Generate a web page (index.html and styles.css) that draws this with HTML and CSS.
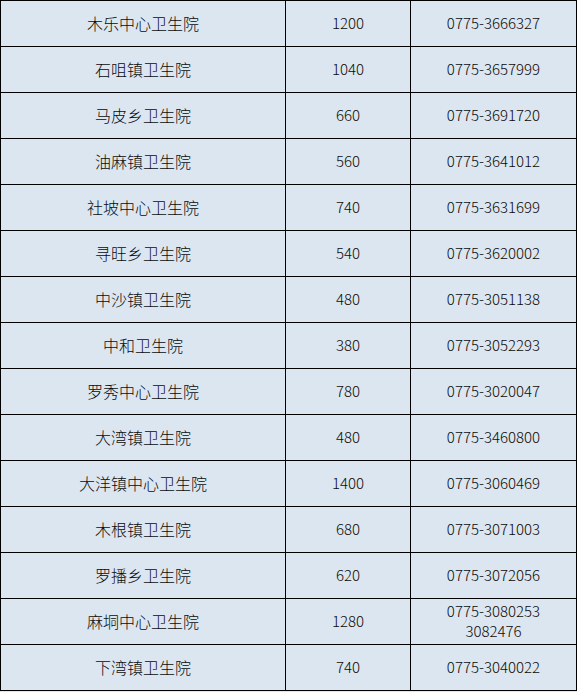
FILE: index.html
```html
<!DOCTYPE html>
<html lang="zh">
<head>
<meta charset="utf-8">
<link rel="stylesheet" href="styles.css">
</head>
<body>
<table class="hosp">
<colgroup><col class="c-name"><col class="c-beds"><col class="c-tel"></colgroup>
<tbody>
<tr><td class="name">木乐中心卫生院</td><td class="num">1200</td><td class="num">0775-3666327</td></tr>
<tr><td class="name">石咀镇卫生院</td><td class="num">1040</td><td class="num">0775-3657999</td></tr>
<tr><td class="name">马皮乡卫生院</td><td class="num">660</td><td class="num">0775-3691720</td></tr>
<tr><td class="name">油麻镇卫生院</td><td class="num">560</td><td class="num">0775-3641012</td></tr>
<tr><td class="name">社坡中心卫生院</td><td class="num">740</td><td class="num">0775-3631699</td></tr>
<tr><td class="name">寻旺乡卫生院</td><td class="num">540</td><td class="num">0775-3620002</td></tr>
<tr><td class="name">中沙镇卫生院</td><td class="num">480</td><td class="num">0775-3051138</td></tr>
<tr><td class="name">中和卫生院</td><td class="num">380</td><td class="num">0775-3052293</td></tr>
<tr><td class="name">罗秀中心卫生院</td><td class="num">780</td><td class="num">0775-3020047</td></tr>
<tr><td class="name">大湾镇卫生院</td><td class="num">480</td><td class="num">0775-3460800</td></tr>
<tr><td class="name">大洋镇中心卫生院</td><td class="num">1400</td><td class="num">0775-3060469</td></tr>
<tr><td class="name">木根镇卫生院</td><td class="num">680</td><td class="num">0775-3071003</td></tr>
<tr><td class="name">罗播乡卫生院</td><td class="num">620</td><td class="num">0775-3072056</td></tr>
<tr><td class="name">麻垌中心卫生院</td><td class="num">1280</td><td class="num two">0775-3080253<br>3082476</td></tr>
<tr><td class="name">下湾镇卫生院</td><td class="num">740</td><td class="num">0775-3040022</td></tr>
</tbody>
</table>
</body>
</html>
```
FILE: styles.css
```css
html, body {
  margin: 0;
  padding: 0;
  background: #dce6f1;
}
.hosp {
  border-collapse: collapse;
  table-layout: fixed;
  width: 576px;
  color: #0a0a0a;
}
.c-name { width: 285px; }
.c-beds { width: 125px; }
.c-tel { width: 166px; }
.hosp td {
  border: 1px solid #000;
  height: 46px;
  padding: 0 0 2px;
  text-align: center;
  vertical-align: middle;
  box-sizing: border-box;
}
.name {
  font-family: "Noto Sans CJK SC", sans-serif;
  font-size: 16px;
  line-height: 20px;
  font-weight: 300;
}
.num {
  font-family: "Noto Sans CJK SC", sans-serif;
  font-size: 15px;
  font-weight: 300;
  font-variant-numeric: tabular-nums;
  line-height: 20px;
}
```
